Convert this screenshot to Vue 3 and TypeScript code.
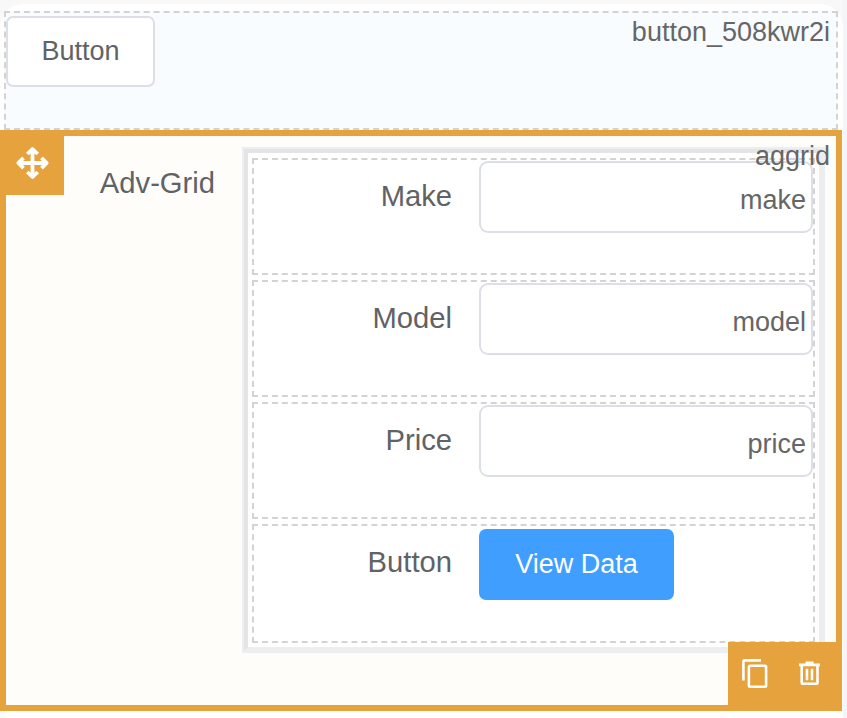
<script setup lang="ts">
interface Field {
  label: string
  name?: string
  action?: string
}

const fields: Field[] = [
  { label: 'Make', name: 'make' },
  { label: 'Model', name: 'model' },
  { label: 'Price', name: 'price' },
  { label: 'Button', action: 'View Data' },
]
</script>

<template>
  <main class="page">
    <div class="canvas">
      <section class="widget">
        <button class="btn" type="button">Button</button>
        <span class="tag">button_508kwr2i</span>
      </section>

      <section class="selected">
        <div class="handle">
          <svg width="35" height="34" viewBox="0 0 35 34" fill="none" stroke="#fff" stroke-width="3.8" stroke-linejoin="round">
            <path d="M17.5 3V31M3.5 17H31.5M12.3 8L17.5 3L22.7 8M12.3 26L17.5 31L22.7 26M8.5 11.8L3.3 17L8.5 22.2M26.5 11.8L31.7 17L26.5 22.2" />
          </svg>
        </div>
        <label class="title">Adv-Grid</label>
        <div class="frame">
          <div class="grid">
            <div v-for="f in fields" :key="f.label" class="row" :class="{ last: f.action }">
              <label class="label">{{ f.label }}</label>
              <button v-if="f.action" class="btn primary" type="button">{{ f.action }}</button>
              <div v-else class="input"></div>
              <span v-if="f.name" class="field-tag">{{ f.name }}</span>
            </div>
          </div>
        </div>
        <span class="tag grid-tag">aggrid</span>
        <div class="actions">
          <svg width="26" height="30" viewBox="0 0 26 30" fill="none" stroke="#fff" stroke-width="2.6">
            <path d="M1.4 21.5V2.6Q1.4 1.4 2.6 1.4H19" />
            <rect x="6.9" y="6.7" width="17.2" height="21" rx="1.2" />
          </svg>
          <svg width="22" height="26" viewBox="0 0 22 26" fill="none" stroke="#fff" stroke-width="2.6">
            <path d="M0 3.9H21M6.5 1.9H14.5M2.7 4V21.4Q2.7 22.8 4.1 22.8H17.1Q18.5 22.8 18.5 21.4V4M8 7.8V19.2M13 7.8V19.2" />
          </svg>
        </div>
      </section>
    </div>
  </main>
</template>

<style>
body {
  margin: 0;
  background: #f5f5f7;
}
</style>

<style scoped>
.page {
  box-sizing: border-box;
  width: 847px;
  height: 718px;
  padding-top: 4px;
  overflow: hidden;
  background: linear-gradient(90deg, #f8f8f8 0, #f8f8f8 842px, #f4f5f8 843px);
  font-family: "Liberation Sans", Arial, sans-serif;
  color: #606266;
}

.canvas {
  box-sizing: border-box;
  width: 843px;
  height: 740px;
  padding-top: 7px;
  border-radius: 23px;
  background: #fff;
}

.widget {
  position: relative;
  box-sizing: border-box;
  width: 834px;
  height: 119px;
  margin-left: 4px;
  padding-top: 3px;
  border: 2px dashed #d3d3d3;
  background: #f8fcff;
}

.btn {
  display: block;
  box-sizing: border-box;
  width: 149px;
  height: 71px;
  padding: 0;
  border: 2px solid #dcdfe6;
  border-radius: 7px;
  background: #fff;
  color: #606266;
  font: 27px "Liberation Sans", Arial, sans-serif;
}

.btn.primary {
  width: 195px;
  margin-top: 3px;
  border-color: #409eff;
  background: #409eff;
  color: #fff;
}

.tag,
.field-tag {
  position: absolute;
  right: 6px;
  top: 4px;
  color: #666;
  font-size: 27px;
  line-height: 31px;
}

.tag.grid-tag {
  top: 5px;
}

.selected {
  position: relative;
  display: flex;
  align-items: flex-start;
  box-sizing: border-box;
  width: 842px;
  height: 581px;
  border: 6px solid #e6a23c;
  background: #fefdf9;
}

.handle {
  display: flex;
  box-sizing: border-box;
  width: 58px;
  height: 59px;
  padding: 10px 0 0 9px;
  background: #e6a23c;
}

.title {
  width: 151px;
  margin: 30px 27px 0 0;
  text-align: right;
  font-size: 29.2px;
  line-height: 34px;
}

.frame {
  box-sizing: border-box;
  width: 583px;
  height: 506px;
  margin-top: 11px;
  border: 2px solid #ebeef5;
  background: #fff;
}

.grid {
  display: flex;
  flex-direction: column;
  gap: 5px;
  box-sizing: border-box;
  height: 502px;
  padding: 5px 4px 4px;
  border: 4px solid;
  border-color: #e4e4e4 #ededee #eeeeee #e4e4e4;
}

.row {
  position: relative;
  display: flex;
  align-items: flex-start;
  box-sizing: border-box;
  width: 563px;
  height: 117px;
  border: 2px dashed #d3d3d3;
}

.row.last {
  height: 119px;
}

.label {
  width: 198px;
  margin: 19px 27px 0 0;
  text-align: right;
  font-size: 29.2px;
  line-height: 34px;
}

.input {
  box-sizing: border-box;
  width: 334px;
  height: 72px;
  margin-top: 1px;
  border: 2px solid #dcdfe6;
  border-radius: 9px;
  background: #fff;
}

.field-tag {
  right: 7px;
  top: 25px;
}

.actions {
  position: absolute;
  right: -6px;
  bottom: -6px;
  display: flex;
  align-items: flex-start;
  gap: 31px;
  box-sizing: border-box;
  width: 114px;
  height: 69px;
  padding: 17px 0 0 14px;
  background: #e6a23c;
}

.actions svg + svg {
  margin-top: 2px;
}
</style>
